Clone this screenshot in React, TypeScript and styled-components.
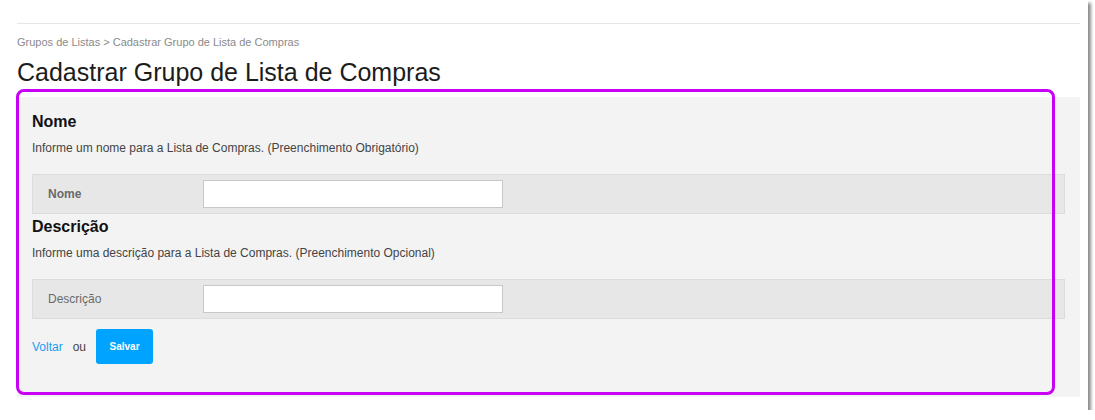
import styled, { createGlobalStyle } from "styled-components";

const GlobalStyle = createGlobalStyle`
  html, body {
    margin: 0;
    padding: 0;
    background: #fff;
    font-family: "Liberation Sans", Arial, sans-serif;
  }
`;

const Frame = styled.div`
  position: relative;
  box-sizing: border-box;
  width: 1088px;
  height: 410px;
  padding: 23px 8px 0 17px;
  background: #fff;
  box-shadow: 3px 3px 3px rgba(0, 0, 0, 0.45);
`;

const Divider = styled.div`
  border-top: 1px solid #e6e6e6;
`;

const Breadcrumb = styled.div`
  margin-top: 11px;
  font-size: 11px;
  line-height: 14px;
  color: #8a8a8a;
`;

const Title = styled.h1`
  margin: 9px 0 0;
  font-size: 25px;
  line-height: 28px;
  font-weight: normal;
  color: #1c1c1c;
`;

const Panel = styled.div`
  margin-top: 11px;
  padding: 16px 15px 33px;
  background: #f3f3f3;
`;

const SectionTitle = styled.h3<{ $gap?: number }>`
  margin: ${(p) => p.$gap ?? 0}px 0 0;
  font-size: 16px;
  line-height: 18px;
  font-weight: bold;
  color: #111;
`;

const Hint = styled.p`
  margin: 10px 0 0;
  font-size: 12px;
  line-height: 14px;
  color: #444;
`;

const FieldRow = styled.div`
  display: flex;
  align-items: center;
  box-sizing: border-box;
  height: 40px;
  margin-top: 19px;
  padding-left: 15px;
  background: #e7e7e7;
  border: 1px solid #dcdcdc;
`;

const Label = styled.label<{ $bold?: boolean }>`
  width: 155px;
  font-size: 12px;
  font-weight: ${(p) => (p.$bold ? "bold" : "normal")};
  color: #6a6a6a;
`;

const TextInput = styled.input`
  box-sizing: border-box;
  width: 300px;
  height: 28px;
  border: 1px solid #c8c8c8;
  background: #fff;
  outline: none;
`;

const Actions = styled.div`
  display: flex;
  align-items: center;
  margin-top: 10px;
  font-size: 12px;
`;

const BackLink = styled.a`
  color: #1e9cf0;
  text-decoration: none;
`;

const Or = styled.span`
  margin: 0 10px 0 10px;
  color: #444;
`;

const SaveButton = styled.button`
  width: 57px;
  height: 35px;
  border: none;
  border-radius: 3px;
  background: #00a3ff;
  color: #fff;
  font-family: "Liberation Sans", Arial, sans-serif;
  font-size: 10px;
  font-weight: bold;
  cursor: pointer;
`;

const Highlight = styled.div`
  position: absolute;
  left: 16px;
  top: 89px;
  width: 1039px;
  height: 306px;
  box-sizing: border-box;
  border: 3px solid #c800f5;
  border-radius: 8px;
  pointer-events: none;
`;

export default function App() {
  return (
    <>
      <GlobalStyle />
      <Frame>
        <Divider />
        <Breadcrumb>Grupos de Listas &gt; Cadastrar Grupo de Lista de Compras</Breadcrumb>
        <Title>Cadastrar Grupo de Lista de Compras</Title>
        <Panel>
          <SectionTitle>Nome</SectionTitle>
          <Hint>Informe um nome para a Lista de Compras. (Preenchimento Obrigatório)</Hint>
          <FieldRow>
            <Label $bold>Nome</Label>
            <TextInput type="text" />
          </FieldRow>
          <SectionTitle $gap={4}>Descrição</SectionTitle>
          <Hint>Informe uma descrição para a Lista de Compras. (Preenchimento Opcional)</Hint>
          <FieldRow>
            <Label>Descrição</Label>
            <TextInput type="text" />
          </FieldRow>
          <Actions>
            <BackLink href="#">Voltar</BackLink>
            <Or>ou</Or>
            <SaveButton>Salvar</SaveButton>
          </Actions>
        </Panel>
        <Highlight />
      </Frame>
    </>
  );
}
